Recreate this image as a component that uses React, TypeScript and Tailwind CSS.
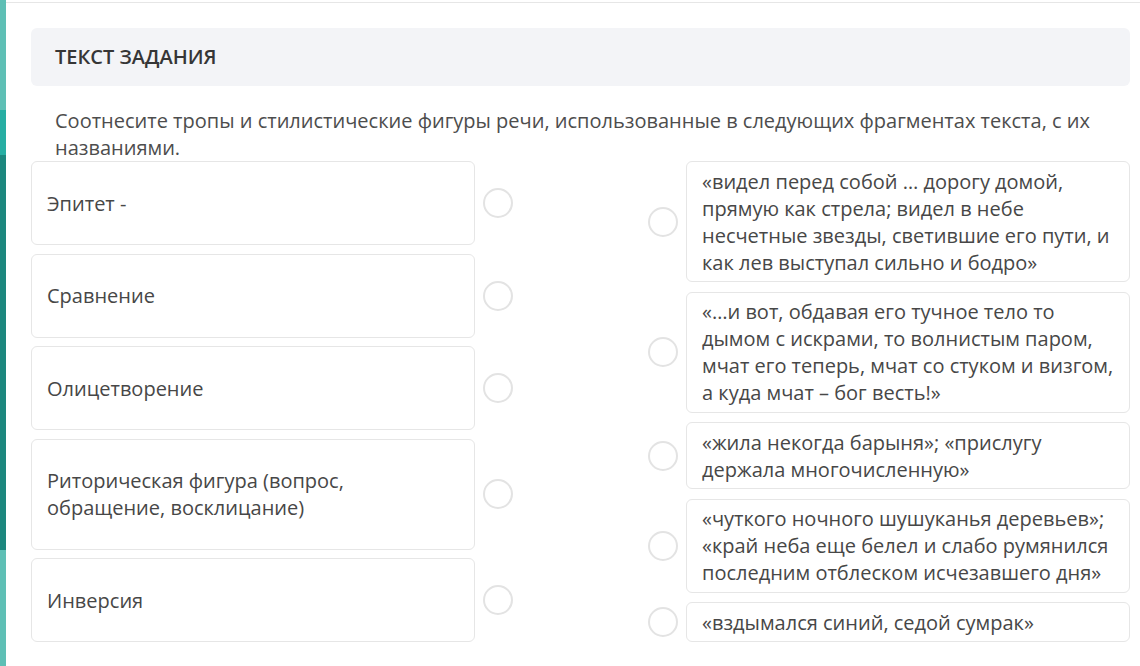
import React from 'react'

const LEFT_ITEMS = [
  'Эпитет -',
  'Сравнение',
  'Олицетворение',
  'Риторическая фигура (вопрос, обращение, восклицание)',
  'Инверсия',
]

const RIGHT_ITEMS = [
  '«видел перед собой … дорогу домой, прямую как стрела; видел в небе несчетные звезды, светившие его пути, и как лев выступал сильно и бодро»',
  '«…и вот, обдавая его тучное тело то дымом с искрами, то волнистым паром, мчат его теперь, мчат со стуком и визгом, а куда мчат – бог весть!»',
  '«жила некогда барыня»; «прислугу держала многочисленную»',
  '«чуткого ночного шушуканья деревьев»; «край неба еще белел и слабо румянился последним отблеском исчезавшего дня»',
  '«вздымался синий, седой сумрак»',
]

function Radio() {
  return (
    <span className="block h-[30px] w-[30px] shrink-0 rounded-full border-2 border-[#e3e3e3] bg-white" />
  )
}

export default function App() {
  return (
    <div
      className="flex h-[666px] w-[1140px] overflow-hidden bg-white text-[#474747]"
      style={{ fontFamily: '"Open Sans", "Noto Sans", sans-serif' }}
    >
      {/* side strip */}
      <div className="flex w-[6px] shrink-0 flex-col">
        <div className="h-[110px] bg-[#5ebfb5]" />
        <div className="h-[45px] bg-[#27aea3]" />
        <div className="h-[395px] bg-[#1c877e]" />
        <div className="flex-1 bg-[#5ebfb5]" />
      </div>

      <div className="flex min-w-0 flex-1 flex-col">
        <div className="mt-[2px] h-px bg-[#e6e6e6]" />

        <div className="ml-[25px] mr-[10px] mt-[25px]">
          <div className="flex h-[58px] items-center rounded-md bg-[#f3f4f7] px-6">
            <h2 className="text-[20px] font-semibold text-[#363636]">
              ТЕКСТ ЗАДАНИЯ
            </h2>
          </div>

          <p className="mt-[21px] px-6 text-[20px] leading-[27px] text-[#4d4d4d]">
            Соотнесите тропы и стилистические фигуры речи, использованные в следующих
            фрагментах текста, с их названиями.
          </p>

          <div className="flex justify-between">
            <div className="flex w-[482px] flex-col gap-[8.5px]">
              {LEFT_ITEMS.map((t) => (
                <div key={t} className="flex items-center gap-[8px]">
                  <div className="w-[444px] rounded-md border border-[#e6e6e6] px-[15px] py-[27.5px] text-[20px] leading-[27px]">
                    {t}
                  </div>
                  <Radio />
                </div>
              ))}
            </div>

            <div className="flex w-[482px] flex-col gap-[9.5px]">
              {RIGHT_ITEMS.map((t) => (
                <div key={t} className="flex items-center gap-[8px]">
                  <Radio />
                  <div className="w-[444px] rounded-md border border-[#e6e6e6] px-[15px] py-[5.5px] text-[20px] leading-[27px]">
                    {t}
                  </div>
                </div>
              ))}
            </div>
          </div>
        </div>
      </div>
    </div>
  )
}
